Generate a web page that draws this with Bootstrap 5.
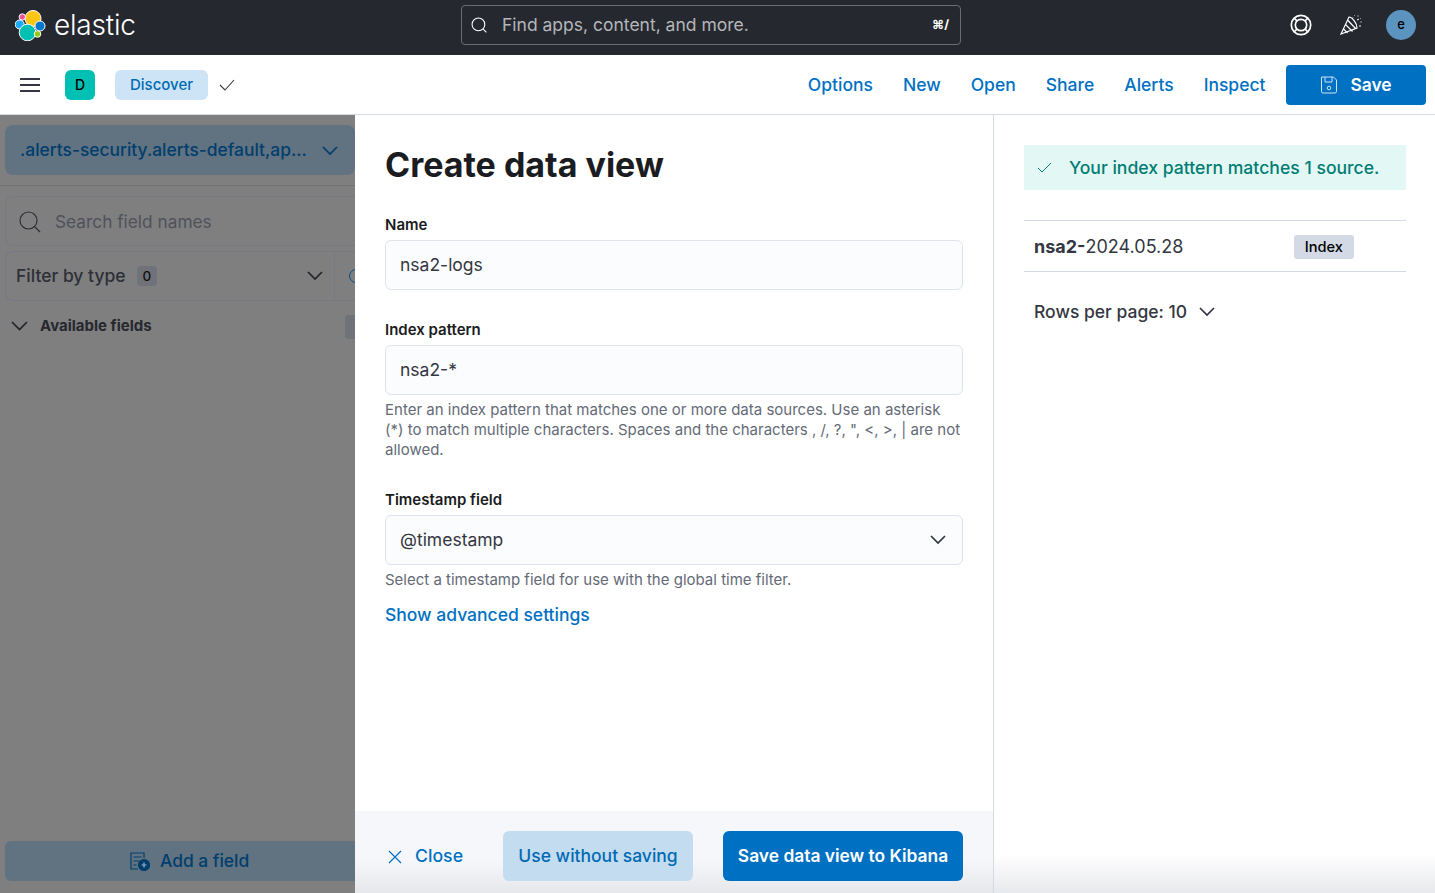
<!DOCTYPE html>
<html lang="en"><head><meta charset="utf-8"><title>Create data view</title>
<link rel="stylesheet" href="https://cdn.jsdelivr.net/npm/bootstrap@5.3.0/dist/css/bootstrap.min.css">
<style>
html,body{height:100%;overflow:hidden}
body{font-family:Inter,"Liberation Sans",sans-serif;font-size:16px;color:#343741;background:#fff}
svg{display:block;flex:none}
.top-dark{height:55px;background:#25282f;padding:0 19px 5px 15px;position:relative}
.logo-word{font-size:28px;color:#fff;font-weight:300;letter-spacing:-.2px;margin-left:8px;line-height:1}
.global-search{position:absolute;left:461px;top:5px;width:500px;height:40px;border:1px solid #6a6c72;border-radius:4px;padding:0 11px 0 9px;color:#b4b6ba;gap:14px;font-size:17.5px}
.kbd-hint{font-size:12.5px;font-weight:700;color:#fff;margin-left:auto}
.ava{width:30px;height:30px;border-radius:50%;background:#5c94c0;color:#000;font-size:13px;font-weight:500;margin-left:24px}
.party{margin-left:28px}
.sub-bar{height:60px;border-bottom:1px solid #d3dae6;padding:0 9px 0 20px}
.square-d{width:30px;height:30px;border-radius:6px;background:#00bfb3;color:#000;font-size:14px;font-weight:500;margin-left:25px}
.crumb{height:30px;width:93px;margin-left:20px;border-radius:6px;background:#cce4f5;color:#006bb4;font-size:15px;font-weight:500;padding-top:1px}
.chk{margin-left:10px}
.tlinks{gap:30px;color:#0071c2;font-weight:500;font-size:17.5px;margin-left:auto;margin-right:20px;padding:1px .5px 0 0}
.btn-k{background:#0071c2;color:#fff;border-radius:4px;font-weight:600;border:0;font-size:17.4px;padding:0}
.save-main{width:140px;height:40px;gap:12px;padding-top:1px}
.work{height:778px}
.side-left{width:355px;background:#7f7f80;flex:none;overflow:hidden;position:relative}
.ds-btn{height:50px;margin:10px 0 0 5px;width:350px;background:#617280;color:#003e6e;font-weight:500;font-size:17.4px;padding:1px 17px 0 15px;border-radius:8px}
.sep-l{height:1px;background:#727274;margin-top:10px}
.in-l{height:50px;margin:10px 0 0 5px;border:1px solid #767a80;border-right:0;border-radius:8px 0 0 8px;color:#4f525a;font-size:17.3px;padding:1px 0 0 13px;gap:14px}
.filter-l{height:50px;margin:5px -6px 0 5px;border:1px solid #767a80;border-right:0;border-radius:8px 0 0 8px;color:#2d2f36;font-size:17.5px;font-weight:500;padding-left:10px}
.zero{background:#6f7278;border-radius:4px;font-size:13.5px;padding:0 6px;line-height:20px;margin-left:11px;color:#111;font-weight:500}
.vrule{width:1px;height:100%;background:#767a80;margin-left:11px;margin-right:12px}
.avail{margin:14px 0 0 11px;color:#26282e;font-weight:700;font-size:15px;gap:12px}
.stub{position:absolute;left:345px;top:200px;width:10px;height:24px;background:#6f7278;border-radius:4px 0 0 4px}
.add-f{position:absolute;left:5px;right:0;bottom:12px;height:40px;background:#617280;border-radius:6px 0 0 6px;color:#003e6e;font-size:17.4px;font-weight:500;gap:10px;padding-left:125px}
.panel-a{width:639px;flex:none;border-right:1px solid #d3dae6;background:#fff}
.form-area{padding:30px 30px 0;flex:1}
.title-h{font-size:34px;font-weight:700;color:#1a1c21;line-height:40px;margin:0 0 30px}
.lbl{font-size:15px;font-weight:600;color:#1a1c21;line-height:20px;margin-bottom:5px}
.inp{height:50px;background:#fbfcfd;border:1px solid #dfe3ec;border-radius:6px;padding:0 16px 0 14px;font-size:17.5px;color:#343741}
.hint{font-size:15px;line-height:20px;color:#646a77;margin-top:5px}
.blk{margin-bottom:30px}
.lnk{color:#0071c2;font-weight:500;font-size:17.5px;line-height:24px;margin-top:13px}
.foot{height:82px;padding:20px 30px 12px;background:linear-gradient(#f5f7fa 0,#f5f7fa 60%,#e6e7ea 100%)}
.close-k{color:#0071c2;font-weight:500;font-size:17.7px;width:118px;gap:12px;padding:1px 0 0 2px;height:50px}
.use-wo{width:190px;height:50px;background:#c4dcf0;color:#006bb4;border-radius:6px;font-weight:500;font-size:17.5px;padding-top:1px}
.save-kb{width:240px;height:50px;margin-left:30px;border-radius:6px;padding-top:1px}
.panel-b{flex:1;padding:30px 29px 0 30px;background:linear-gradient(#fff 0,#fff 95%,#e8e9ec 100%)}
.ok-box{height:45px;background:#e3f8f5;color:#017d73;font-weight:500;font-size:17.6px;padding:1px 0 0 13px;gap:17px}
.row-ix{margin-top:30px;height:52px;border-top:1px solid #d3dae6;border-bottom:1px solid #d3dae6;padding-left:10px;font-size:18px}
.tag-ix{margin:1px 52px 0 auto;background:#d3dae6;border-radius:3px;color:#000;font-size:14.6px;font-weight:500;line-height:24px;padding:0 11px}
.rows-pp{margin:28px 0 0 10px;font-size:17.5px;font-weight:500;color:#343741;gap:12px;line-height:24px}
</style></head><body>
<header class="top-dark d-flex align-items-center">
<svg width="31" height="31" viewBox="0 0 31 31" stroke="#fff" stroke-width="1"><circle cx="18" cy="8.500" r="8" fill="#fec514"/><circle cx="7.300" cy="7" r="3.200" fill="#f04e98"/><circle cx="4.700" cy="14.500" r="4.500" fill="#1ba9f5"/><circle cx="25" cy="16" r="5" fill="#0077cc"/><circle cx="12.500" cy="22.500" r="8.300" fill="#00bfb3"/><circle cx="22.500" cy="24" r="3.300" fill="#93c90e"/></svg>
<span class="logo-word">elastic</span>
<div class="global-search d-flex align-items-center">
<svg width="17" height="17" viewBox="0 0 16 16" fill="none" stroke="#fff" stroke-width="1"><circle cx="7" cy="7" r="6"/><path d="M11.500 11.500l3 3"/></svg>
<span>Find apps, content, and more.</span><span class="kbd-hint">⌘/</span></div>
<div class="ms-auto d-flex align-items-center">
<svg width="22" height="22" viewBox="0 0 22 22" fill="none" stroke="#fff" stroke-width="1.700"><circle cx="11" cy="11" r="9.700"/><circle cx="11" cy="11" r="5.700"/><path d="M4.200 4.200l2.800 2.800M17.800 4.200L15 7M4.200 17.800L7 15M17.800 17.800L15 15"/></svg>
<svg class="party" width="22" height="22" viewBox="0 0 22 22" fill="none" stroke="#fff" stroke-width="1.200"><path d="M1 20L9 3c3 0 8 6 8 11zM5.500 10.500l7 7M3.500 15l4 4M7.500 6l8 8.500"/><path d="M12 5l1-1.500M14.500 1.500h.5M18 1.500v1M17 6l2-1M20.500 8h1M19 12h2M20.500 4v.5" stroke-width="1"/></svg>
<div class="ava d-flex align-items-center justify-content-center">e</div></div>
</header>
<div class="sub-bar d-flex align-items-center">
<svg width="20" height="16" viewBox="0 0 20 16" stroke="#343741" stroke-width="2"><path d="M0 2h20M0 8h20M0 14h20"/></svg>
<div class="square-d d-flex align-items-center justify-content-center">D</div>
<div class="crumb d-flex align-items-center justify-content-center">Discover</div>
<svg class="chk" width="20" height="12" viewBox="0 0 20 12" fill="none" stroke="#343741" stroke-width="1.100"><path d="M2 6l5 5 9-10"/></svg>
<nav class="tlinks d-flex"><span>Options</span><span>New</span><span>Open</span><span>Share</span><span>Alerts</span><span>Inspect</span></nav>
<button class="btn-k save-main d-flex align-items-center justify-content-center"><svg width="18" height="18" viewBox="0 0 18 18" fill="none" stroke="#cfe4f5"><path d="M1.500 1h12l3 3v11.500a1.500 1.500 0 0 1-1.500 1.500h-12a1.500 1.500 0 0 1-1.500-1.500zM5 1v5h7V1"/><circle cx="9" cy="12" r="1.800"/></svg>Save</button>
</div>
<main class="work d-flex">
<aside class="side-left">
<div class="ds-btn d-flex align-items-center justify-content-between"><span>.alerts-security.alerts-default,ap...</span><svg width="16" height="10" viewBox="0 0 16 10" fill="none" stroke="#003e6e" stroke-width="1.700"><path d="M1 1l7 7 7-7"/></svg></div>
<div class="sep-l"></div>
<div class="in-l d-flex align-items-center"><svg width="22" height="22" viewBox="0 0 22 22" fill="none" stroke="#2f3036" stroke-width="1.200"><circle cx="9.500" cy="9.500" r="8.500"/><path d="M16 16l5 5"/></svg><span>Search field names</span></div>
<div class="filter-l d-flex align-items-center"><span>Filter by type</span><span class="zero">0</span><svg class="ms-auto" width="16" height="10" viewBox="0 0 16 10" fill="none" stroke="#22242a" stroke-width="1.700"><path d="M1 1l7 7 7-7"/></svg><span class="vrule"></span><svg width="14" height="16" viewBox="0 0 14 16" fill="none" stroke="#004f86"><circle cx="9" cy="8" r="6.500"/></svg></div>
<div class="avail d-flex align-items-center"><svg width="17" height="10" viewBox="0 0 17 10" fill="none" stroke="#22242a" stroke-width="1.700"><path d="M1 1l7.500 7.500L16 1"/></svg><span>Available fields</span></div>
<div class="stub"></div>
<div class="add-f d-flex align-items-center"><svg width="20" height="20" viewBox="0 0 20 20" fill="none" stroke="#003e6e" stroke-width="1.200"><path d="M14 7V2H1v16h7M3.500 6h8M3.500 10h6M3.500 14h3"/><circle cx="14" cy="14" r="5.500" fill="#003e6e"/><path d="M14 11.500v5M11.500 14h5" stroke="#9fb0bd"/></svg><span>Add a field</span></div>
</aside>
<section class="panel-a d-flex flex-column">
<div class="form-area">
<h1 class="title-h">Create data view</h1>
<div class="blk"><div class="lbl">Name</div><div class="inp d-flex align-items-center">nsa2-logs</div></div>
<div class="blk"><div class="lbl">Index pattern</div><div class="inp d-flex align-items-center">nsa2-*</div><div class="hint">Enter an index pattern that matches one or more data sources. Use an asterisk (*) to match multiple characters. Spaces and the characters , /, ?, ", &lt;, &gt;, | are not allowed.</div></div>
<div><div class="lbl">Timestamp field</div><div class="inp d-flex align-items-center justify-content-between">@timestamp<svg width="16" height="10" viewBox="0 0 16 10" fill="none" stroke="#343741" stroke-width="1.700"><path d="M1 1l7 7 7-7"/></svg></div><div class="hint">Select a timestamp field for use with the global time filter.</div></div>
<div class="lnk">Show advanced settings</div>
</div>
<footer class="foot d-flex align-items-start">
<div class="close-k d-flex align-items-center"><svg width="16" height="16" viewBox="0 0 16 16" stroke="#0071c2" stroke-width="1.200"><path d="M2 2l12 12M14 2L2 14"/></svg>Close</div>
<div class="use-wo d-flex align-items-center justify-content-center">Use without saving</div>
<button class="btn-k save-kb">Save data view to Kibana</button>
</footer>
</section>
<section class="panel-b">
<div class="ok-box d-flex align-items-center"><svg width="15" height="12" viewBox="0 0 15 12" fill="none" stroke="#017d73"><path d="M1 6l4 4 9-9"/></svg>Your index pattern matches 1 source.</div>
<div class="row-ix d-flex align-items-center"><span><b class="fw-bold">nsa2-</b>2024.05.28</span><span class="tag-ix">Index</span></div>
<div class="rows-pp d-flex align-items-center"><span>Rows per page: 10</span><svg width="16" height="10" viewBox="0 0 16 10" fill="none" stroke="#343741" stroke-width="1.700"><path d="M1 1l7 7 7-7"/></svg></div>
</section>
</main>
</body></html>
